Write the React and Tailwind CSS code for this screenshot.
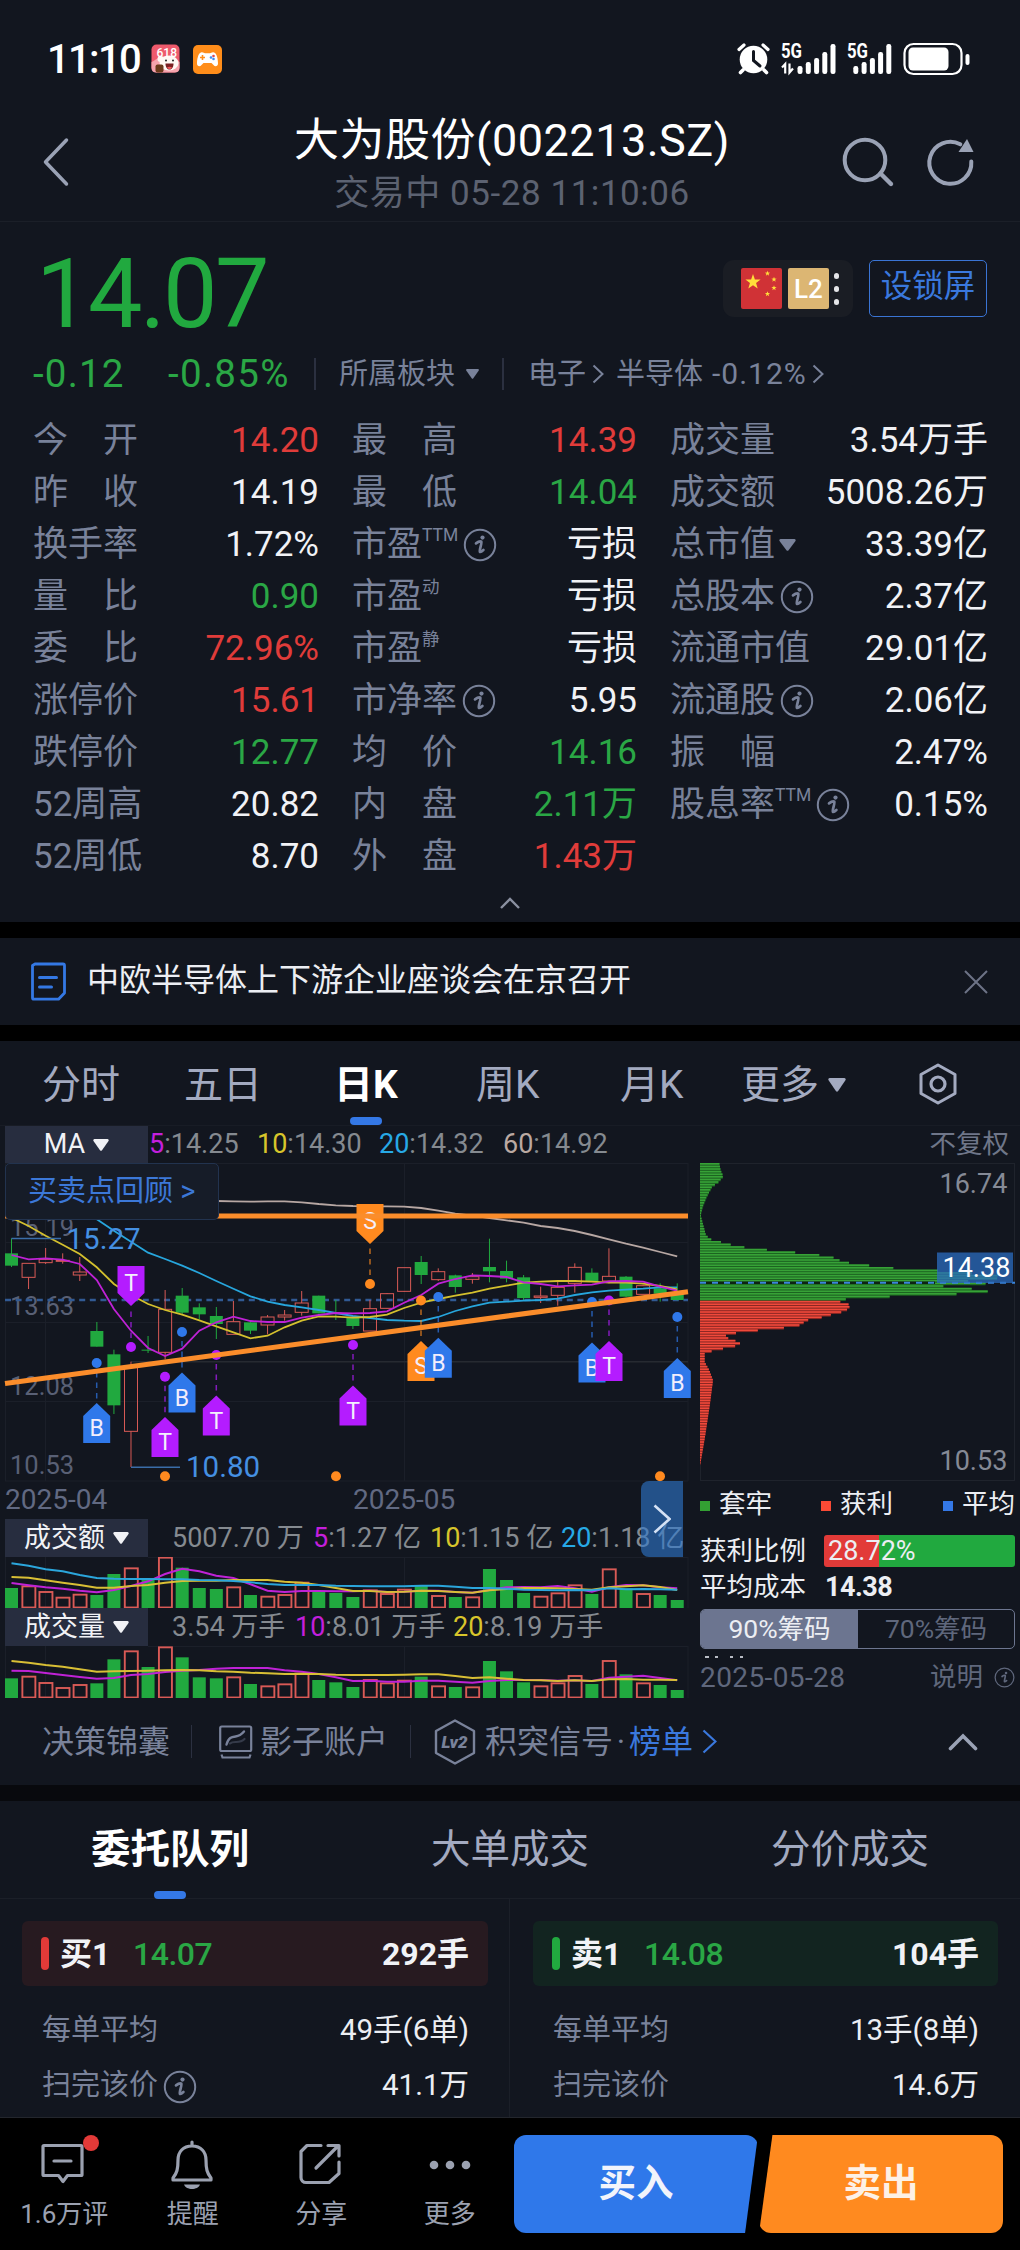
import React from "react";

const RED = "#e23a38";
const GREEN = "#21a93f";
const UP = "#d95a56";

const textColor = {
  red: "text-[#e03c3a]",
  green: "text-[#2aa745]",
  white: "text-[#f1f2f6]",
};

const stats = [
  [
    { label: "今　开", value: "14.20", color: "red" },
    { label: "昨　收", value: "14.19" },
    { label: "换手率", value: "1.72%" },
    { label: "量　比", value: "0.90", color: "green" },
    { label: "委　比", value: "72.96%", color: "red" },
    { label: "涨停价", value: "15.61", color: "red" },
    { label: "跌停价", value: "12.77", color: "green" },
    { label: "52周高", value: "20.82" },
    { label: "52周低", value: "8.70" },
  ],
  [
    { label: "最　高", value: "14.39", color: "red" },
    { label: "最　低", value: "14.04", color: "green" },
    { label: "市盈", sup: "TTM", info: true, value: "亏损" },
    { label: "市盈", sup: "动", value: "亏损" },
    { label: "市盈", sup: "静", value: "亏损" },
    { label: "市净率", info: true, value: "5.95" },
    { label: "均　价", value: "14.16", color: "green" },
    { label: "内　盘", value: "2.11万", color: "green" },
    { label: "外　盘", value: "1.43万", color: "red" },
  ],
  [
    { label: "成交量", value: "3.54万手" },
    { label: "成交额", value: "5008.26万" },
    { label: "总市值", arrow: true, value: "33.39亿" },
    { label: "总股本", info: true, value: "2.37亿" },
    { label: "流通市值", value: "29.01亿" },
    { label: "流通股", info: true, value: "2.06亿" },
    { label: "振　幅", value: "2.47%" },
    { label: "股息率", sup: "TTM", info: true, value: "0.15%" },
  ],
];

// [type, high, body top, body bottom, low], in thirds of a pixel below y = 1120
const candles = [
  ["G", 355, 400, 437, 441],
  ["R", 430, 430, 472, 507],
  ["R", 384, 418, 428, 432],
  ["R", 400, 421, 424, 431],
  ["R", 411, 456, 465, 483],
  ["G", 606, 633, 680, 680],
  ["G", 689, 703, 856, 882],
  ["R", 725, 740, 934, 1041],
  ["G", 648, 689, 692, 699],
  ["R", 510, 568, 697, 718],
  ["G", 504, 527, 578, 585],
  ["G", 550, 562, 583, 598],
  ["G", 561, 588, 612, 657],
  ["R", 543, 605, 643, 643],
  ["G", 600, 607, 632, 642],
  ["R", 585, 591, 615, 643],
  ["R", 570, 585, 591, 602],
  ["R", 513, 549, 577, 587],
  ["G", 527, 527, 580, 580],
  ["G", 540, 578, 582, 600],
  ["G", 588, 591, 618, 627],
  ["R", 540, 566, 633, 633],
  ["R", 519, 521, 565, 566],
  ["R", 443, 443, 514, 515],
  ["G", 408, 426, 465, 492],
  ["R", 445, 455, 479, 483],
  ["G", 464, 466, 501, 518],
  ["R", 459, 470, 478, 491],
  ["G", 356, 441, 454, 487],
  ["G", 422, 453, 476, 487],
  ["G", 465, 472, 534, 540],
  ["R", 500, 528, 532, 549],
  ["R", 480, 502, 526, 557],
  ["R", 430, 442, 490, 518],
  ["G", 445, 458, 486, 486],
  ["R", 385, 469, 483, 490],
  ["G", 468, 470, 530, 531],
  ["R", 494, 497, 523, 523],
  ["G", 490, 505, 521, 545],
  ["G", 490, 520, 540, 541],
];

const ma5 = [405, 418, 415, 419, 432, 480, 567, 632, 684, 708, 686, 632, 607, 590, 603, 606, 606, 593, 585, 579, 580, 579, 574, 548, 525, 491, 477, 466, 468, 471, 487, 492, 499, 496, 494, 484, 483, 485, 500, 512];
const ma10 = [293, 318, 347, 374, 402, 442, 492, 525, 552, 570, 584, 601, 619, 637, 655, 647, 622, 602, 589, 590, 593, 591, 584, 564, 548, 537, 527, 518, 506, 497, 488, 485, 483, 483, 485, 488, 488, 491, 498, 508];
const ma20 = [298, 332, 365, 398, 417, 437, 459, 483, 506, 529, 545, 555, 562, 570, 579, 588, 594, 600, 602, 603, 591, 573, 559, 548, 545, 542, 540, 536, 525, 517, 512, 509, 506, 502, 502];
const ma60 = [243, 243, 244, 245, 244, 244, 247, 252, 256, 258, 259, 259, 260, 264, 272, 281, 287, 294, 301, 308, 318, 324, 333, 345, 358, 371, 383, 396, 409];

const turnoverBars = [264, 256, 273, 290, 281, 285, 222, 202, 240, 170, 203, 264, 267, 259, 285, 287, 282, 245, 272, 279, 291, 268, 279, 266, 257, 285, 291, 289, 207, 240, 279, 287, 277, 253, 282, 205, 265, 279, 285, 300];
const turnover5 = [249, 256, 262, 266, 272, 277, 270, 258, 244, 222, 206, 214, 227, 234, 253, 272, 276, 273, 273, 274, 274, 272, 276, 275, 272, 272, 276, 278, 270, 262, 261, 262, 258, 265, 275, 262, 255, 256, 262, 265];
const turnover10 = [231, 233, 241, 248, 255, 263, 263, 258, 255, 248, 243, 242, 242, 240, 240, 240, 245, 248, 255, 264, 273, 273, 276, 275, 272, 273, 276, 278, 271, 267, 264, 264, 265, 267, 269, 262, 259, 256, 261, 270];
const turnover20 = [190, 197, 208, 214, 225, 234, 236, 237, 237, 238, 238, 240, 241, 243, 247, 252, 255, 255, 255, 257, 258, 259, 259, 259, 257, 257, 260, 264, 264, 266, 269, 270, 271, 270, 271, 265, 268, 267, 268, 269];

const volumeBars = [535, 527, 546, 561, 552, 550, 478, 451, 501, 439, 472, 532, 535, 529, 552, 556, 550, 518, 540, 547, 561, 537, 547, 539, 530, 556, 561, 559, 483, 514, 547, 556, 547, 525, 552, 480, 523, 547, 555, 570];
const volume10 = [512, 513, 519, 525, 531, 536, 534, 525, 522, 516, 512, 510, 506, 504, 504, 504, 511, 515, 522, 532, 543, 542, 545, 545, 542, 542, 545, 548, 543, 540, 540, 540, 542, 541, 543, 533, 530, 527, 534, 541];
const volume20 = [483, 488, 495, 500, 508, 515, 514, 513, 512, 511, 510, 511, 514, 515, 518, 520, 522, 521, 522, 524, 525, 525, 525, 524, 523, 523, 528, 534, 532, 536, 540, 541, 543, 541, 543, 538, 537, 539, 539, 540];

const markers = [
  { kind: "T", x: 131, dot: 1347, tip: 1306, down: true },
  { kind: "B", x: 96.7, dot: 1363, tip: 1403 },
  { kind: "T", x: 165, dot: 1376.7, tip: 1417 },
  { kind: "B", x: 182, dot: 1332, tip: 1372.5 },
  { kind: "T", x: 216.3, dot: 1355, tip: 1395.5 },
  { kind: "T", x: 353, dot: 1345, tip: 1385.5 },
  { kind: "S", x: 370, dot: 1284, tip: 1244, down: true },
  { kind: "S", x: 421, dot: 1300.5, tip: 1341 },
  { kind: "B", x: 438.3, dot: 1297, tip: 1337.7 },
  { kind: "B", x: 592, dot: 1302, tip: 1342.5 },
  { kind: "T", x: 609, dot: 1300.5, tip: 1341 },
  { kind: "B", x: 677.3, dot: 1317, tip: 1358 },
];
const markerColor = { T: "#b41cff", B: "#2f78ea", S: "#ff8a1f" };

// [y, width] in thirds of a pixel
const chips = [
  [129, 58], [150, 62], [168, 70], [185, 56], [200, 36], [230, 20], [260, 8], [285, 2],
  [300, 6], [345, 18], [352, 26], [357, 33], [363, 56], [371, 84], [379, 120], [387, 185],
  [394, 263], [402, 345], [410, 396], [418, 416], [425, 427], [433, 494], [441, 543],
  [448, 672], [456, 790], [464, 870], [472, 945], [480, 750], [487, 940], [495, 702],
  [503, 788], [511, 878], [519, 824], [526, 633], [534, 450], [542, 411], [550, 444],
  [558, 450], [565, 444], [573, 436], [581, 398], [589, 380], [596, 332], [604, 312],
  [612, 309], [620, 276], [628, 195], [635, 126], [643, 78], [651, 78], [658, 96],
  [666, 120], [674, 120], [682, 81], [690, 47], [697, 14], [725, 14], [750, 28],
  [780, 39], [850, 30], [950, 15], [1031, 1],
];

function chipWidth(y) {
  for (let i = 1; i < chips.length; i++) {
    if (y <= chips[i][0]) {
      const [y0, w0] = chips[i - 1];
      const [y1, w1] = chips[i];
      return w0 + ((w1 - w0) * (y - y0)) / (y1 - y0);
    }
  }
  return 0;
}

const xAt = (i) => 11.5 + 17.07 * i;
const line = (data, base, start = 0) =>
  data.map((v, i) => `${xAt(i + start).toFixed(1)},${(v / 3 + base).toFixed(1)}`).join(" ");

function InfoIcon({ size = 34, className = "" }) {
  return (
    <svg width={size} height={size} viewBox="0 0 34 34" className={className}>
      <circle cx="17" cy="17" r="15.2" fill="none" stroke="currentColor" strokeWidth="2" />
      <circle cx="19.5" cy="9.6" r="2.1" fill="currentColor" />
      <path d="M13 15.4c2.200-1.700 4.600-2.200 5.400-1.700.8.6-2.400 9.300-1.600 10 .5.500 2.300-.5 3.600-1.700" fill="none" stroke="currentColor" strokeWidth="2.700" strokeLinecap="round" />
    </svg>
  );
}

function Caret({ w = 16, h = 12, className = "" }) {
  return (
    <svg width={w} height={h} viewBox="0 0 16 12" preserveAspectRatio="none" className={className}>
      <path d="M1.500 0h13a1.300 1.300 0 0 1 1 2L9 11.200a1.300 1.300 0 0 1-2 0L.5 2a1.300 1.300 0 0 1 1-2z" fill="currentColor" />
    </svg>
  );
}

function Chevron({ w, h, stroke = 2, className = "" }) {
  return (
    <svg width={w} height={h} viewBox={`0 0 ${w} ${h}`} className={className}>
      <path d={`M1.500 1.500L${w - 1.5} ${h / 2}L1.500 ${h - 1.5}`} fill="none" stroke="currentColor" strokeWidth={stroke} />
    </svg>
  );
}

function Signal({ sub }) {
  return (
    <svg width="56" height="32" viewBox="0 0 56 32" className="overflow-visible">
      <text x="0" y="15" fontSize="20" fontWeight="700" fill="#fff" textLength="21" lengthAdjust="spacingAndGlyphs">5G</text>
      {sub && (
        <path d="M1 24.500l3.200-3.500v9.500M8.500 20.500v9l3.500-4" fill="none" stroke="#fff" strokeWidth="2.200" />
      )}
      {[
        [19, 23],
        [27.300, 19],
        [35.600, 15],
        [43.800, 9],
        [52, 1],
      ].map(([x, y]) => (
        <rect key={x} x={sub ? x - 2.5 : x - 12.700} y={y} width="5" height={31 - y} rx="2.200" fill="#fff" />
      ))}
    </svg>
  );
}

function StatusBar() {
  return (
    <div className="flex h-[118px] items-center pl-[47px] pr-[50px] text-white">
      <span className="mt-[2px] w-[103px] whitespace-nowrap text-[40px] font-medium leading-none tracking-[-1.700px]">11:10</span>
      <svg width="30" height="30" viewBox="0 0 30 30" className="ml-px">
        <rect x="0.500" y="0.500" width="28" height="28" rx="5" fill="#ee5a6c" />
        <path d="M.5 18c6-3 8-6 14-6s10 2 14 6v6c0 3-2 4.500-4.500 4.500H5C2.500 28.500.5 27 .5 24z" fill="#f7a3ad" />
        <ellipse cx="18" cy="19" rx="9.500" ry="7.500" fill="#fff8f4" />
        <circle cx="9.500" cy="15" r="3" fill="#fff8f4" />
        <path d="M14.500 19.500h8c0 4-2 6-4 6s-4-2-4-6z" fill="#7a1f22" />
        <path d="M16 23.500c1.500-1 3.500-1 5 0-1.500 2-3.500 2-5 0z" fill="#f0555a" />
        <circle cx="15" cy="16.500" r="1" fill="#222" />
        <circle cx="22" cy="16.500" r="1" fill="#222" />
        <rect x="4.500" y="20.500" width="8" height="8" rx="2" fill="#6b3a1c" />
        <text x="5.500" y="12.500" fontSize="12" fontWeight="500" fill="#fff">618</text>
      </svg>
      <svg width="29" height="29" viewBox="0 0 29 29" className="ml-[12px]">
        <rect width="29" height="29" rx="5" fill="#ff8d1a" />
        <path d="M8 7.500c2-.6 3 .7 4 .7h5c1 0 2-1.300 4-.7 3 1 4 7 4 11 0 3-3 3.500-4.500 1.500L18.500 18h-8L8.500 20C7 22 4 21.500 4 18.500c0-4 1-10 4-11z" fill="#fff" />
        <path d="M9.500 10v5M7 12.500h5" stroke="#ff8d1a" strokeWidth="1.600" />
        <circle cx="18" cy="12.500" r="1.300" fill="#3c8cf0" />
        <circle cx="20.500" cy="11" r="1.300" fill="#e0484a" />
        <circle cx="20.500" cy="14" r="1.300" fill="#3c8cf0" />
      </svg>
      <svg width="34" height="32" viewBox="0 0 34 32" className="ml-auto">
        <circle cx="16.500" cy="16.500" r="13.800" fill="#fff" />
        <path d="M2 6.500L7 2M31 6.500L26 2" stroke="#fff" strokeWidth="3.200" strokeLinecap="round" />
        <path d="M6 27l-2.500 2.500M27 27l2.500 2.500" stroke="#fff" strokeWidth="3.600" strokeLinecap="round" />
        <path d="M16.500 8.500v9l6.500 5.500" fill="none" stroke="#12161f" strokeWidth="3" strokeLinecap="round" />
      </svg>
      <div className="ml-[10px] flex w-[66px]">
        <Signal sub />
      </div>
      <div className="flex w-[56px]">
        <Signal />
      </div>
      <svg width="67" height="34" viewBox="0 0 67 34">
        <rect x="1.500" y="2" width="57" height="30" rx="9" fill="none" stroke="#fff" strokeWidth="2.200" />
        <rect x="5.500" y="5.500" width="40" height="23" rx="4.500" fill="#fff" />
        <rect x="62.500" y="12" width="4" height="11" rx="2" fill="#fff" />
      </svg>
    </div>
  );
}

function Header() {
  return (
    <div className="flex h-[104px] items-start border-b border-[#1b1f28] px-[43px] text-[#9aa2b5]">
      <svg width="26" height="50" viewBox="0 0 26 50" className="mt-[19px]">
        <path d="M23.500 3L2.500 25l21 22" fill="none" stroke="currentColor" strokeWidth="3.500" strokeLinecap="round" strokeLinejoin="round" />
      </svg>
      <div className="ml-[80px] flex w-[726px] shrink-0 flex-col items-center">
        <div className="mt-px whitespace-nowrap text-[45px] leading-[44px] tracking-[0.500px] text-white">大为股份(002213.SZ)</div>
        <div className="mt-[13px] whitespace-nowrap text-[35px] leading-[35px] tracking-[0.550px] text-[#5c6271]">交易中 05-28 11:10:06</div>
      </div>
      <svg width="56" height="52" viewBox="0 0 56 52" className="-ml-[34px] mt-[18px] shrink-0">
        <circle cx="24" cy="24" r="20.300" fill="none" stroke="currentColor" strokeWidth="4" />
        <path d="M39.500 37.500L50 48" stroke="currentColor" strokeWidth="4.400" strokeLinecap="round" />
      </svg>
      <svg width="50" height="52" viewBox="0 0 50 52" className="ml-[28px] mt-[18px] shrink-0">
        <path d="M46.300 25.500a21 21 0 1 1-11-17.200" fill="none" stroke="currentColor" strokeWidth="4" strokeLinecap="round" />
        <path d="M42 3l6.500 13H33.500z" fill="currentColor" />
      </svg>
    </div>
  );
}

function Star({ x, y, r }) {
  const pts = Array.from({ length: 10 }, (_, i) => {
    const a = (Math.PI / 5) * i - Math.PI / 2;
    const d = i % 2 ? r * 0.4 : r;
    return `${x + d * Math.cos(a)},${y + d * Math.sin(a)}`;
  });
  return <polygon points={pts.join(" ")} fill="#ffde3a" />;
}

function Quote() {
  return (
    <div className="flex flex-col">
      <div className="flex h-[126px] items-start justify-between pl-[36px] pr-[33px]">
        <div className="mt-[24px] text-[97px] leading-[97px] tracking-[-2.500px] text-[#21a93f]">14.07</div>
        <div className="mt-[38px] flex">
          <div className="flex h-[57px] w-[130px] items-center gap-[6px] rounded-[11px] bg-[#1a1d24] pl-[18px]">
            <svg width="41" height="41" viewBox="0 0 41 41">
              <rect width="41" height="41" rx="2" fill="#d03236" />
              <Star x={12} y={14} r={8} />
              <Star x={26.500} y={5.500} r={2.800} />
              <Star x={33} y={11.500} r={2.800} />
              <Star x={33} y={20} r={2.800} />
              <Star x={26.500} y={26} r={2.800} />
            </svg>
            <div className="flex h-[41px] w-[41px] items-center justify-center rounded-[2px] bg-[#dcb673] text-[26px] font-medium leading-none text-white">L2</div>
            <div className="-ml-px flex flex-col gap-[7px]">
              <div className="h-[6px] w-[5px] rounded-full bg-[#e4e5e8]" />
              <div className="h-[6px] w-[5px] rounded-full bg-[#e4e5e8]" />
              <div className="h-[6px] w-[5px] rounded-full bg-[#e4e5e8]" />
            </div>
          </div>
          <div className="ml-[16px] flex h-[57px] w-[118px] items-center justify-center rounded-[5px] border border-[#3a74d4] pb-[4px] text-[31.500px] leading-none text-[#3a78dd]">设锁屏</div>
        </div>
      </div>
      <div className="flex h-[52px] items-center pl-[33px] text-[29px] leading-none text-[#79829a]">
        <span className="w-[135px] text-[38.500px] tracking-[1.200px] text-[#2aa745]">-0.12</span>
        <span className="w-[146px] whitespace-nowrap text-[38.500px] tracking-[1.300px] text-[#2aa745]">-0.85%</span>
        <div className="h-[32px] w-[2px] bg-[#2b3040]" />
        <span className="ml-[23px] w-[127px]">所属板块</span>
        <Caret w={13} h={10} />
        <div className="ml-[23px] h-[32px] w-[2px] bg-[#2b3040]" />
        <span className="ml-[24px] w-[64px]">电子</span>
        <Chevron w={12} h={20} />
        <span className="ml-[12px] w-[96px]">半导体</span>
        <span className="w-[100px] text-[30px] tracking-[1px]">-0.12%</span>
        <Chevron w={12} h={20} />
      </div>
    </div>
  );
}

function StatRow({ item }) {
  return (
    <div className="flex h-[52px] items-center justify-between text-[35px] leading-none">
      <div className="flex items-center text-[#79829a]">
        <span>{item.label}</span>
        {item.sup && (
          <span className="-mt-[17px] text-[17.500px] leading-none">{item.sup}</span>
        )}
        {item.arrow && <Caret w={17} h={12} className="ml-[4px] mt-[2px]" />}
        {item.info && <InfoIcon className="ml-[5px] mt-[2px]" />}
      </div>
      <span className={textColor[item.color || "white"]}>{item.value}</span>
    </div>
  );
}

function Stats() {
  return (
    <div className="flex h-[522px] flex-col items-center">
      <div className="mt-[14px] grid w-full grid-cols-[286px_285px_318px] gap-x-[33px] pl-[33px]">
        {stats.map((col, i) => (
          <div key={i} className="flex flex-col">
            {col.map((item, j) => (
              <StatRow key={j} item={item} />
            ))}
          </div>
        ))}
      </div>
      <svg width="22" height="14" viewBox="0 0 22 14" className="mt-[14px] text-[#8a90a0]">
        <path d="M2 12l9-9 9 9" fill="none" stroke="currentColor" strokeWidth="2.400" />
      </svg>
    </div>
  );
}

function NewsBar() {
  return (
    <div className="flex h-[87px] items-center bg-[#12161f] pl-[31px] pr-[31px]">
      <svg width="35" height="39" viewBox="0 0 35 39">
        <path d="M4 2h28a1.500 1.500 0 0 1 1.500 1.500V31l-6 6.200H3A1.500 1.500 0 0 1 1.500 35.700V3.500z" fill="none" stroke="#3478e4" strokeWidth="2.800" strokeLinejoin="round" />
        <path d="M8.500 15.500h17M8.500 25h12" stroke="#3478e4" strokeWidth="3" strokeLinecap="round" />
      </svg>
      <span className="ml-[21px] pb-[3px] text-[32px] leading-none text-[#eceef3]">中欧半导体上下游企业座谈会在京召开</span>
      <svg width="26" height="26" viewBox="0 0 26 26" className="ml-auto text-[#6d7386]">
        <path d="M2 2l22 22M24 2L2 24" stroke="currentColor" strokeWidth="2" />
      </svg>
    </div>
  );
}

function PeriodTabs() {
  return (
    <div className="flex h-[84px] items-start pl-[42px] text-[39px] leading-[88px] text-[#a3aac0]">
      <span className="w-[142px]">分时</span>
      <span className="w-[150px]">五日</span>
      <div className="flex w-[142px] flex-col text-white">
        <span className="h-[76px] font-bold">日K</span>
        <div className="ml-[16px] h-[8px] w-[32px] rounded-[4px] bg-[#3478e6]" />
      </div>
      <span className="w-[144px]">周K</span>
      <span className="w-[121px]">月K</span>
      <span className="w-[87px]">更多</span>
      <Caret w={18} h={14} className="mt-[37px]" />
      <svg width="38" height="42" viewBox="0 0 38 42" className="ml-[73px] mt-[22px]">
        <path d="M19 2l17 9.500v19L19 40 2 30.500v-19z" fill="none" stroke="currentColor" strokeWidth="3" strokeLinejoin="round" />
        <circle cx="19" cy="21" r="7" fill="none" stroke="currentColor" strokeWidth="3.200" />
      </svg>
    </div>
  );
}

function Marker({ kind, x, dot, tip, down }) {
  const c = markerColor[kind];
  const s = down ? -1 : 1;
  return (
    <g>
      <line x1={x} x2={x} y1={dot + 9 * s} y2={tip - 3 * s} stroke={c} strokeOpacity="0.700" strokeWidth="1.500" strokeDasharray="5.500 5" />
      <circle cx={x} cy={dot} r="5" fill={c} />
      <path d={`M${x} ${tip}L${x + 13.5} ${tip + 13 * s}V${tip + 40 * s}H${x - 13.5}V${tip + 13 * s}z`} fill={c} />
      <text x={x} y={down ? tip - 15 : tip + 33} textAnchor="middle" fontSize="23" fill="#f3eefc">{kind}</text>
    </g>
  );
}

function CandleChart() {
  return (
    <svg width="696" height="318" viewBox="0 1163 696 318" className="overflow-visible">
      <g stroke="#1b1f29" strokeWidth="1">
        <path d="M5 1163.500H688M5 1242.500H688M5 1322.500H688M5 1401.500H688M5 1481H688M5.500 1163V1481M45.500 1163V1481M404.500 1163V1481M688 1163V1481" />
        <path d="M131 1361.700H688" stroke="#262a31" strokeWidth="1.500" />
      </g>
      <g fontSize="25.500" fill="#596075">
        <text x="10" y="1236">15.19</text>
        <text x="10" y="1314.500">13.63</text>
        <text x="10" y="1395">12.08</text>
        <text x="10" y="1474">10.53</text>
      </g>
      <path d="M5 1300H688" stroke="#315a94" strokeWidth="2.600" strokeDasharray="6 4.600" />
      {candles.map(([type, high, top, bottom, low], i) => {
        const x = xAt(i);
        const y = (v) => 1120 + v / 3;
        return type === "G" ? (
          <g key={i} fill="#21a93f">
            <rect x={x - 0.5} y={y(high)} width="1" height={(low - high) / 3} />
            <rect x={x - 6.500} y={y(top)} width="13" height={(bottom - top) / 3} />
          </g>
        ) : (
          <g key={i} stroke={UP} fill="none">
            <path d={`M${x} ${y(high)}V${y(top)}M${x} ${y(bottom)}V${y(low)}`} />
            <rect x={x - 6.500} y={y(top)} width="13" height={(bottom - top) / 3} />
          </g>
        );
      })}
      <g fill="none" strokeWidth="1.800">
        <polyline points={line(ma60, 1120, 11)} stroke="#b7a7a3" />
        <polyline points={line(ma20, 1120, 5)} stroke="#27a6dd" />
        <polyline points={line(ma10, 1120)} stroke="#d4c02e" />
        <polyline points={line(ma5, 1120)} stroke="#bf22d6" />
      </g>
      <g stroke="#3a6da8" strokeWidth="1.500">
        <path d="M11.500 1238.500H61" />
        <path d="M131 1467.300H180" />
      </g>
      <g fontSize="29.500" fill="#4590e2">
        <text x="66.500" y="1249">15.27</text>
        <text x="186" y="1477">10.80</text>
      </g>
      {markers.map((m, i) => (
        <Marker key={i} {...m} />
      ))}
      <path d="M5 1216H688M5 1383.500L688 1291.700" stroke="#fb8d2b" strokeWidth="5" />
      {[165, 336, 660].map((x) => (
        <circle key={x} cx={x} cy="1476.300" r="5" fill="#ff8a1f" />
      ))}
    </svg>
  );
}

function VolumeChart({ bars, base, top, height, lines }) {
  return (
    <svg width="690" height={height} viewBox={`0 ${top} 690 ${height}`} className="block">
      <path d={`M148 ${top + 0.500}H688M5.500 ${top}V${top + height}M45.500 ${top}V${top + height}M404.500 ${top}V${top + height}M688 ${top}V${top + height}`} stroke="#1b1f29" />
      {bars.map((v, i) => {
        const y = 1500 + v / 3;
        const h = base - y;
        return candles[i][0] === "G" ? (
          <rect key={i} x={xAt(i) - 6.500} y={y} width="13" height={h} fill={GREEN} />
        ) : (
          <rect key={i} x={xAt(i) - 6.200} y={y + 1} width="13" height={h - 1.500} fill="none" stroke={UP} strokeWidth="1.900" />
        );
      })}
      {lines.map(([data, color]) => (
        <polyline key={color} points={line(data, 1500)} fill="none" stroke={color} strokeWidth="2" />
      ))}
    </svg>
  );
}

function ChipChart() {
  const rows = Array.from({ length: 116 }, (_, i) => 129 + i * 7.8);
  return (
    <svg width="324" height="319" viewBox="696 1163 324 319" className="overflow-visible">
      <rect x="700.500" y="1163.500" width="314" height="317" fill="none" stroke="#1f232c" />
      {rows.map((v) => {
        const w = chipWidth(v + 2) / 3;
        const y = 1120 + v / 3;
        const red = v > 538;
        return (
          <g key={v}>
            <rect x="700" y={y} width={w} height="2.700" fill={red ? "#8d2723" : "#1c6420"} />
            <rect x="700" y={y} width={w} height="1.600" fill={red ? "#f0493b" : "#37a237"} />
          </g>
        );
      })}
      <rect x="700" y="1281.500" width="235" height="2.500" fill="#0d2314" />
      <path d="M700 1282.700H1015" stroke="#3b86dc" strokeWidth="2" strokeDasharray="6 6" />
      <rect x="937" y="1252.500" width="76" height="30.500" fill="#2b6cc0" fillOpacity="0.750" />
      <g fontSize="27" fill="#858a96">
        <text x="939.500" y="1193">16.74</text>
        <text x="939.500" y="1470">10.53</text>
        <text x="942.500" y="1277" fill="#fff">14.38</text>
      </g>
    </svg>
  );
}

function IndicatorLabel({ children }) {
  return (
    <div className="ml-[5px] flex h-[38px] w-[143px] shrink-0 items-center justify-center gap-[8px] bg-[#272d3f] text-[#f1f2f6]">
      <span>{children}</span>
      <Caret w={16} h={12} />
    </div>
  );
}

function Ma({ n, color, value, className }) {
  return (
    <span className={className}>
      <span className={color}>{n}</span>:{value}
    </span>
  );
}

function ChipPanel() {
  return (
    <div className="flex w-[324px] flex-col pl-[4px] pr-[5px] text-[26.500px] leading-none text-[#eceef3]">
      <div className="-ml-[4px] h-[319px]">
        <ChipChart />
      </div>
      <div className="flex h-[44px] items-center">
        <div className="mt-[3px] h-[10px] w-[10px] bg-[#33a033]" />
        <span className="ml-[9px] w-[102px]">套牢</span>
        <div className="mt-[3px] h-[10px] w-[10px] bg-[#f94a35]" />
        <span className="ml-[9px] w-[103px]">获利</span>
        <div className="mt-[3px] h-[10px] w-[10px] bg-[#3478e6]" />
        <span className="ml-[9px] whitespace-nowrap">平均</span>
      </div>
      <div className="mt-[9px] flex h-[32px] items-center">
        <span className="w-[124px]">获利比例</span>
        <div className="flex h-[32px] w-[191px] items-center overflow-hidden rounded-[3px] bg-[linear-gradient(90deg,#e23a38_55px,#21a93f_55px)] pl-[4px] text-[27px]">28.72%</div>
      </div>
      <div className="flex h-[41px] items-center">
        <span className="w-[125px]">平均成本</span>
        <span className="text-[27px] font-bold tracking-[-0.500px]">14.38</span>
      </div>
      <div className="mt-[1px] flex h-[40px] overflow-hidden rounded-[5px] border border-[#6d7690]">
        <div className="flex w-[157px] items-center justify-center bg-[#6c7590]">90%筹码</div>
        <div className="flex flex-1 items-center justify-center text-[#5f677c]">70%筹码</div>
      </div>
      <div className="mt-[7px] flex h-[2px] pl-[5px]">
        <div className="h-[2px] w-[4px] bg-[#b9bcc5]" />
        <div className="ml-[6px] h-[2px] w-[3px] bg-[#b9bcc5]" />
        <div className="ml-[12px] h-[2px] w-[3px] bg-[#b9bcc5]" />
        <div className="ml-[7px] h-[2px] w-[3px] bg-[#b9bcc5]" />
      </div>
      <div className="mt-px flex h-[37px] items-center text-[#5f677c]">
        <span className="text-[28px] tracking-[0.400px]">2025-05-28</span>
        <span className="ml-auto mr-[11px]">说明</span>
        <InfoIcon size={21} />
      </div>
    </div>
  );
}

function Charts() {
  return (
    <div className="flex h-[573px] flex-col text-[27px] leading-none text-[#858a90]">
      <div className="flex h-[38px] items-center border-t border-[#181c25]">
        <IndicatorLabel>MA</IndicatorLabel>
        <Ma n="5" value="14.25" color="text-[#c31fdc]" className="ml-px w-[108px]" />
        <Ma n="10" value="14.30" color="text-[#d8c52b]" className="w-[122px]" />
        <Ma n="20" value="14.32" color="text-[#27a9e6]" className="w-[124px]" />
        <Ma n="60" value="14.92" color="text-[#bba9a2]" />
        <span className="ml-auto mr-[11px] text-[26.500px] text-[#6f7689]">不复权</span>
      </div>
      <div className="flex">
        <div className="relative flex w-[696px] flex-col">
          <CandleChart />
          <div className="absolute left-[5px] top-0 flex h-[57px] w-[214px] items-center rounded-[5px] border border-[#22334f] bg-[#161c28] pl-[22px] text-[29px] text-[#3c78d8]">
            买卖点回顾 &gt;
          </div>
          <div className="flex h-[38px] items-center pl-[5px] text-[28px] text-[#616982]">
            <span className="w-[348px]">2025-04</span>
            <span>2025-05</span>
          </div>
          <div className="flex h-[38px] items-center whitespace-nowrap">
            <IndicatorLabel>成交额</IndicatorLabel>
            <span className="ml-[24px] w-[141px]">5007.70 万</span>
            <Ma n="5" value="1.27 亿" color="text-[#c31fdc]" className="w-[117px]" />
            <Ma n="10" value="1.15 亿" color="text-[#d8c52b]" className="w-[131px]" />
            <Ma n="20" value="1.18 亿" color="text-[#27a9e6]" />
          </div>
          <VolumeChart
            bars={turnoverBars}
            base={1608}
            top={1557}
            height={51}
            lines={[
              [turnover5, "#bf22d6"],
              [turnover10, "#d8bf35"],
              [turnover20, "#2ba6dc"],
            ]}
          />
          <div className="flex h-[38px] items-center whitespace-nowrap">
            <IndicatorLabel>成交量</IndicatorLabel>
            <span className="ml-[24px] w-[123px]">3.54 万手</span>
            <Ma n="10" value="8.01 万手" color="text-[#c31fdc]" className="w-[158px]" />
            <Ma n="20" value="8.19 万手" color="text-[#d8c52b]" />
          </div>
          <VolumeChart
            bars={volumeBars}
            base={1698}
            top={1646}
            height={52}
            lines={[
              [volume10, "#bf22d6"],
              [volume20, "#d8bf35"],
            ]}
          />
          <div className="absolute left-[641px] top-[318px] flex h-[76px] w-[42px] items-center justify-center rounded-l-[8px] bg-[#2f7ad0]/60 text-[#d5e2f5]">
            <Chevron w={18} h={30} stroke={2.6} />
          </div>
        </div>
        <ChipPanel />
      </div>
    </div>
  );
}

function Tools() {
  return (
    <div className="flex h-[87px] items-center pl-[42px] text-[32px] leading-none text-[#79829a]">
      <span className="w-[149px]">决策锦囊</span>
      <div className="h-[33px] w-px bg-[#2b3040]" />
      <svg width="34" height="34" viewBox="0 0 34 34" className="ml-[27px]" fill="none" stroke="currentColor">
        <rect x="1.200" y="1.500" width="31" height="24.500" rx="1.500" strokeWidth="2.200" />
        <path d="M2.500 29.500l1 3h27l1-3" strokeWidth="2.200" />
        <path d="M7.500 19.500c2-7 5-7.500 9-8 4-.5 6-2 8.500-5" strokeWidth="2.400" strokeLinecap="round" />
        <path d="M11 18.500c4-3.500 9 1 14.500-4.500" strokeWidth="2.200" opacity="0.350" strokeLinecap="round" />
      </svg>
      <span className="ml-[7px] w-[150px]">影子账户</span>
      <div className="h-[33px] w-px bg-[#2b3040]" />
      <svg width="42" height="46" viewBox="0 0 42 46" className="ml-[23px]">
        <path d="M21 1.500l19 10.500v22L21 44.500 2 34V12z" fill="none" stroke="currentColor" strokeWidth="2.400" strokeLinejoin="round" />
        <text x="20.500" y="29" textAnchor="middle" fontSize="17" fontWeight="900" fontStyle="italic" fill="currentColor" textLength="26" lengthAdjust="spacingAndGlyphs">Lv2</text>
      </svg>
      <span className="ml-[9px]">积突信号</span>
      <span className="w-[16px] text-center">·</span>
      <span className="w-[73px] text-[#3a78dd]">榜单</span>
      <Chevron w={15} h={25} stroke={2.2} className="text-[#3a78dd]" />
      <svg width="30" height="18" viewBox="0 0 30 18" className="ml-[231px] text-[#9aa2b5]">
        <path d="M2.500 15.500L15 3l12.500 12.500" fill="none" stroke="currentColor" strokeWidth="3.600" strokeLinecap="round" />
      </svg>
    </div>
  );
}

function OrderSide({ side, name, price, hands, avg, total, info }) {
  const buy = side === "buy";
  return (
    <div className={buy ? "flex w-[510px] flex-col border-r border-[#1b1f28] pl-[22px] pr-[21px]" : "flex w-[510px] flex-col pl-[23px] pr-[22px]"}>
      <div className={`mt-[22px] flex h-[65px] items-center rounded-[6px] pl-[19px] pr-[19px] text-[32px] font-bold leading-none text-[#f1f2f6] ${buy ? "bg-[#271a20]" : "bg-[#122420]"}`}>
        <div className={`h-[33px] w-[8px] rounded-[4px] ${buy ? "bg-[#e23a38]" : "bg-[#21a93f]"}`} />
        <span className="ml-[11px] w-[73px]">{name}</span>
        <span className="font-medium tracking-[-0.500px] text-[#2aa745]">{price}</span>
        <span className="ml-auto">{hands}</span>
      </div>
      <div className="mt-[17px] flex h-[55px] items-center justify-between pl-[20px] pr-[19px] text-[29px] leading-none">
        <span className="text-[#79829a]">每单平均</span>
        <span className="text-[29.500px] text-[#eceef3]">{avg}</span>
      </div>
      <div className="flex h-[55px] items-center justify-between pl-[20px] pr-[19px] text-[29px] leading-none">
        <div className="flex items-center text-[#79829a]">
          扫完该价{info && <InfoIcon className="ml-[5px] mt-[2px]" />}
        </div>
        <span className="text-[29.500px] text-[#eceef3]">{total}</span>
      </div>
    </div>
  );
}

function Orders() {
  return (
    <div className="flex h-[316px] flex-col bg-[#12161f]">
      <div className="grid h-[98px] grid-cols-3 border-b border-[#1b1f28] text-center text-[39.500px] leading-[97px] text-[#a3aac0]">
        <div className="flex flex-col items-center text-white">
          <span className="h-[90px] font-bold">委托队列</span>
          <div className="h-[8px] w-[32px] rounded-[4px] bg-[#3478e6]" />
        </div>
        <span>大单成交</span>
        <span>分价成交</span>
      </div>
      <div className="flex flex-1">
        <OrderSide side="buy" name="买1" price="14.07" hands="292手" avg="49手(6单)" total="41.1万" info />
        <OrderSide side="sell" name="卖1" price="14.08" hands="104手" avg="13手(8单)" total="14.6万" />
      </div>
    </div>
  );
}

function NavItem({ label, children }) {
  return (
    <div className="flex w-[128.500px] flex-col items-center text-[#9ba1b0]">
      <svg width="60" height="54" viewBox="0 0 60 54" fill="none" stroke="currentColor" strokeWidth="3.200" className="mt-[22px] overflow-visible">
        {children}
      </svg>
      <span className="mt-[5px] whitespace-nowrap text-[26px] leading-[30px]">{label}</span>
    </div>
  );
}

function BottomBar() {
  return (
    <div className="flex h-[133px] border-t border-[#23262d] bg-black">
      <div className="flex w-[514px] shrink-0">
        <NavItem label="1.6万评">
          <path d="M10 5.500h37a1 1 0 0 1 1 1v28a1 1 0 0 1-1 1H33.500L29 41.500 24.500 35.500H10a1 1 0 0 1-1-1v-28a1 1 0 0 1 1-1z" strokeLinejoin="round" />
          <path d="M20 21h17" strokeLinecap="round" />
          <circle cx="57" cy="3" r="8" fill={RED} stroke="none" />
        </NavItem>
        <NavItem label="提醒">
          <path d="M29 2v4M29 6c-9 0-14 6-14 14 0 9-1 13-5 18v2h38v-2c-4-5-5-9-5-18 0-8-5-14-14-14z" strokeLinejoin="round" strokeLinecap="round" />
          <path d="M21 44.500h16c-2 6-14 6-16 0z" fill="currentColor" stroke="none" />
        </NavItem>
        <NavItem label="分享">
          <path d="M30 5.500H16l-6 6v26a5 5 0 0 0 5 5h23l10-9V22" strokeLinejoin="round" strokeLinecap="round" />
          <path d="M25 28L46 7M37 5.500h11V16" strokeLinejoin="round" strokeLinecap="round" />
        </NavItem>
        <NavItem label="更多">
          <g fill="currentColor" stroke="none">
            <circle cx="14" cy="25" r="4.300" />
            <circle cx="30" cy="25" r="4.300" />
            <circle cx="46" cy="25" r="4.300" />
          </g>
        </NavItem>
      </div>
      <div className="mt-[17px] flex h-[98px] w-[244px] shrink-0 items-center justify-center rounded-[12px] bg-[#2f78ea] text-[37.500px] font-bold leading-none text-[#f1f4fb] [clip-path:polygon(0_0,100%_0,94.700%_100%,0_100%)]">
        买入
      </div>
      <div className="ml-px mt-[17px] flex h-[98px] w-[244px] shrink-0 items-center justify-center rounded-[12px] bg-[#ff8a1f] text-[37.500px] font-bold leading-none text-[#fdf1e6] [clip-path:polygon(5.500%_0,100%_0,100%_100%,0_100%)]">
        卖出
      </div>
    </div>
  );
}

export default function App() {
  return (
    <div className="flex h-[2250px] w-[1020px] flex-col overflow-hidden bg-[#12161f] font-[Roboto,'Noto_Sans_CJK_SC',sans-serif]">
      <StatusBar />
      <Header />
      <Quote />
      <Stats />
      <div className="h-[16px] shrink-0 bg-black" />
      <NewsBar />
      <div className="h-[16px] shrink-0 bg-black" />
      <PeriodTabs />
      <Charts />
      <Tools />
      <div className="h-[16px] shrink-0 bg-[#08090d]" />
      <Orders />
      <BottomBar />
    </div>
  );
}
